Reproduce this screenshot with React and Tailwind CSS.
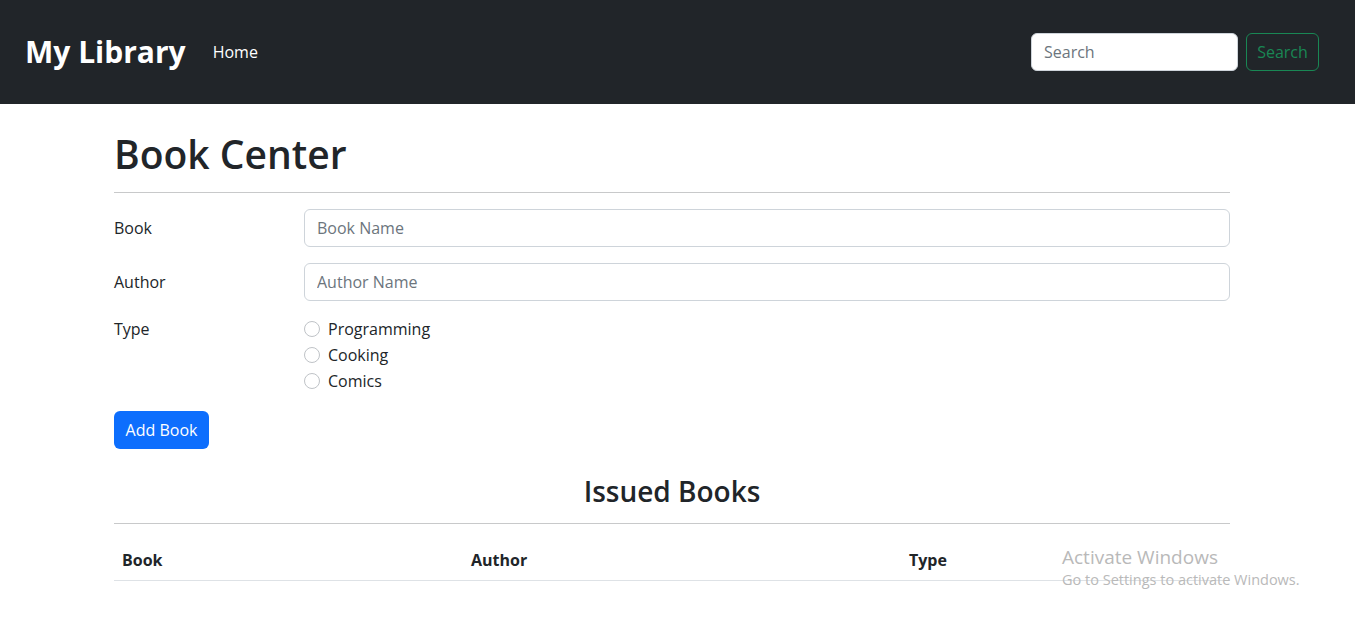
import React from "react";

const types = ["Programming", "Cooking", "Comics"];

const App = () => {
  return (
    <div className="relative min-h-[622px] bg-white font-['Open_Sans',sans-serif] text-[#212529]">
      {/* Navbar */}
      <nav className="flex h-[104px] items-center justify-between bg-[#212529] pl-[25px] pr-[36px]">
        <div className="flex items-center">
          <span className="text-[30px] font-bold leading-none text-white">My Library</span>
          <span className="ml-[27px] text-[16px] text-white">Home</span>
        </div>
        <div className="flex items-center gap-2">
          <input
            placeholder="Search"
            className="h-[38px] w-[207px] rounded-[6px] border border-[#ced4da] bg-white px-3 text-[16px] placeholder-[#6c757d] outline-none"
          />
          <button className="h-[38px] w-[73px] rounded-[6px] border border-[#198754] text-[16px] text-[#198754]">
            Search
          </button>
        </div>
      </nav>

      {/* Content */}
      <div className="pl-[114px] pr-[125px]">
        <h1 className="pt-[26px] text-[39px] font-semibold leading-[48px]">Book Center</h1>
        <hr className="mt-[14px] border-t border-[#c8c9ca]" />

        <form className="mt-[16px]">
          <div className="flex items-center">
            <label className="w-[190px] text-[16px]">Book</label>
            <input
              placeholder="Book Name"
              className="h-[38px] flex-1 rounded-[6px] border border-[#ced4da] px-3 text-[16px] placeholder-[#6c757d] outline-none"
            />
          </div>
          <div className="mt-[16px] flex items-center">
            <label className="w-[190px] text-[16px]">Author</label>
            <input
              placeholder="Author Name"
              className="h-[38px] flex-1 rounded-[6px] border border-[#ced4da] px-3 text-[16px] placeholder-[#6c757d] outline-none"
            />
          </div>
          <div className="mt-[16px] flex">
            <label className="w-[190px] text-[16px] leading-[24px]">Type</label>
            <div className="flex flex-col">
              {types.map((t) => (
                <div key={t} className="flex h-[26px] items-start">
                  <span className="mt-[4px] h-[16px] w-[16px] rounded-full border border-[#bfc3c7] bg-white" />
                  <span className="ml-[8px] text-[16px] leading-[24px]">{t}</span>
                </div>
              ))}
            </div>
          </div>
          <button
            type="button"
            className="mt-[16px] h-[38px] w-[95px] rounded-[6px] bg-[#0d6efd] text-[16px] text-white"
          >
            Add Book
          </button>
        </form>

        <h3 className="mt-[25px] text-center text-[28px] font-semibold leading-[34px]">Issued Books</h3>
        <hr className="mt-[15px] border-t border-[#c8c9ca]" />

        <table className="mt-[16px] w-full border-collapse text-left">
          <thead>
            <tr className="border-b border-[#dee2e6]">
              <th className="w-[349px] px-2 py-2 text-[16px] font-bold">Book</th>
              <th className="w-[438px] px-2 py-2 text-[16px] font-bold">Author</th>
              <th className="px-2 py-2 text-[16px] font-bold">Type</th>
            </tr>
          </thead>
        </table>
      </div>

      {/* Windows watermark */}
      <div className="pointer-events-none absolute left-[1062px] top-[545px] text-[#b9b9b9]">
        <div className="text-[19px] leading-[24px]">Activate Windows</div>
        <div className="text-[14.5px] leading-[22px]">Go to Settings to activate Windows.</div>
      </div>
    </div>
  );
};

export default App;
